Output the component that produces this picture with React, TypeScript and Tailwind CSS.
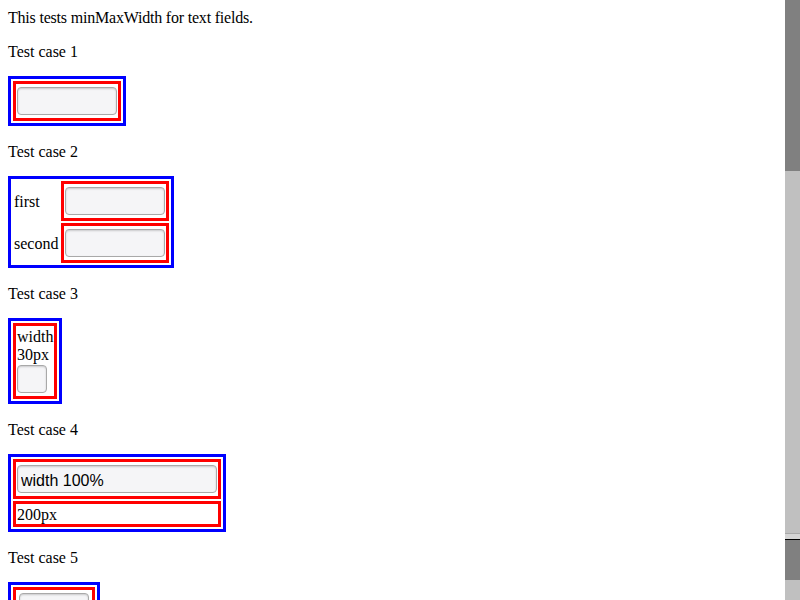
const field =
  'block h-[28px] bg-[#f5f5f7] border border-[#a9a9a9] rounded-[4px] shadow-[inset_0_1px_2px_rgba(0,0,0,0.18)] px-[3px] text-[16px] text-black outline-none';

// text sits one pixel lower in its 18px line than the default leading gives
function Line({ children, className = '' }: { children: React.ReactNode; className?: string }) {
  return <div className={`h-[18px] leading-[20px] ${className}`}>{children}</div>;
}

export default function App() {
  return (
    <div
      className="flex h-[600px] overflow-hidden bg-white text-black text-[16px]"
      style={{ fontFamily: '"Liberation Serif", "Times New Roman", serif' }}
    >
      <div className="flex-1 flex flex-col items-start pl-2 pt-2">
        <Line className="tracking-[-0.2px]">This tests minMaxWidth for text fields.</Line>

        <Line className="mt-4">Test case 1</Line>
        <div className="mt-4 border-[3px] border-[#0000ff] p-[2px]">
          <div className="border-[3px] border-[#ff0000] px-[1px] py-[3px]">
            <input type="text" readOnly className={`${field} w-[100px]`} />
          </div>
        </div>

        <Line className="mt-4">Test case 2</Line>
        <div className="mt-4 border-[3px] border-[#0000ff] p-[2px] grid grid-cols-[auto_auto] gap-[2px]">
          <div className="flex items-center px-[1px]">
            <Line>first</Line>
          </div>
          <div className="border-[3px] border-[#ff0000] px-[1px] py-[3px]">
            <input type="text" readOnly className={`${field} w-[100px]`} />
          </div>
          <div className="flex items-center px-[1px]">
            <Line>second</Line>
          </div>
          <div className="border-[3px] border-[#ff0000] px-[1px] py-[3px]">
            <input type="text" readOnly className={`${field} w-[100px]`} />
          </div>
        </div>

        <Line className="mt-4">Test case 3</Line>
        <div className="mt-4 border-[3px] border-[#0000ff] p-[2px]">
          <div className="flex flex-col border-[3px] border-[#ff0000] px-[1px] pt-[1px] pb-[3px]">
            <Line>width</Line>
            <Line>30px</Line>
            <input type="text" readOnly className={`${field} mt-[2px] w-[30px]`} />
          </div>
        </div>

        <Line className="mt-4">Test case 4</Line>
        <div className="mt-4 flex flex-col gap-[2px] border-[3px] border-[#0000ff] p-[2px]">
          <div className="border-[3px] border-[#ff0000] px-[1px] py-[3px]">
            <input
              type="text"
              readOnly
              value="width 100%"
              className={`${field} w-[200px] pt-[3px]`}
              style={{ fontFamily: '"Liberation Sans", Arial, sans-serif' }}
            />
          </div>
          <div className="border-[3px] border-[#ff0000] p-[1px]">
            <Line>200px</Line>
          </div>
        </div>

        <Line className="mt-4">Test case 5</Line>
        <div className="mt-4 border-[3px] border-[#0000ff] p-[2px]">
          <div className="border-[3px] border-[#ff0000] p-[3px]">
            <input type="text" readOnly className={`${field} w-[70px]`} />
          </div>
        </div>
      </div>

      <div className="w-[15px] flex flex-col shrink-0">
        <div className="h-[171px] bg-[#808080]" />
        <div className="h-[362px] bg-[#c0c0c0]" />
        <div className="h-[1px] bg-[#a8a8a8]" />
        <div className="h-[5px] bg-[#d4d4d4]" />
        <div className="h-[1px] bg-black" />
        <div className="h-[40px] bg-[#808080]" />
        <div className="flex-1 bg-[#c0c0c0]" />
      </div>
    </div>
  );
}
